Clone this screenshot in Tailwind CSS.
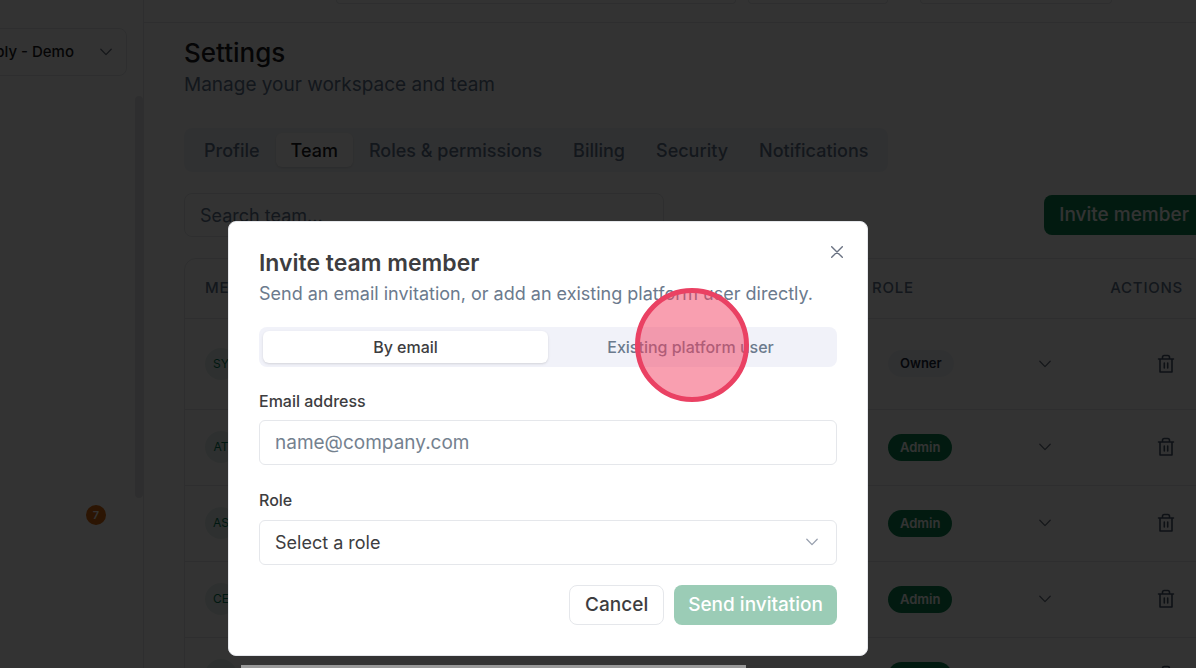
<!DOCTYPE html>
<html lang="en">
<head>
  <meta charset="UTF-8" />
  <meta name="viewport" content="width=device-width, initial-scale=1.0"/>
  <title>Settings | Team</title>
  <script src="https://cdn.jsdelivr.net/npm/@tailwindcss/browser@4"></script>
</head>
<body class="relative h-screen overflow-hidden bg-white font-['Inter',sans-serif] text-[#1c1c1e]">

  <!-- Icons -->
  <svg class="hidden">
    <symbol id="chevron" viewBox="0 0 16 16" fill="none" stroke="currentColor" stroke-width="1.3" stroke-linecap="round" stroke-linejoin="round">
      <path d="M2.800 5.300 8 10.600l5.200-5.300" />
    </symbol>
    <symbol id="trash" viewBox="0 0 18 20" fill="none" stroke="currentColor" stroke-width="1.600" stroke-linecap="round" stroke-linejoin="round">
      <path d="M1.500 5h15M3 5v13h12V5M5.500 5V3.200Q5.500 1.500 7.200 1.500h3.600Q12.500 1.500 12.500 3.200V5M7.300 9v5M10.700 9v5" />
    </symbol>
  </svg>

  <div class="flex h-full">
    <!-- Sidebar -->
    <aside class="relative flex w-36 shrink-0 flex-col overflow-hidden border-r border-gray-200 pt-7">
      <button class="-ml-4 mr-4 flex h-12 items-center justify-end gap-6 overflow-hidden whitespace-nowrap rounded-lg border border-gray-200 pr-3 text-[15px] font-medium">
        <span>Supply - Demo</span>
        <svg class="size-4 shrink-0 text-gray-500"><use href="#chevron" /></svg>
      </button>
      <a href="#" class="mt-[429px] mr-[37px] flex size-5 items-center justify-center self-end rounded-full bg-[#d9690f] text-[11px] font-semibold text-white">7</a>
      <div class="absolute top-24 right-0 h-[402px] w-2 rounded bg-gray-200"></div>
    </aside>

    <div class="min-w-0 flex-1 overflow-hidden">
      <!-- Top bar -->
      <header class="flex h-[23px] items-start gap-3 border-b border-gray-200 pl-48">
        <div class="h-1 w-[400px] rounded-b-lg border border-t-0 border-gray-200"></div>
        <div class="h-1 w-[140px] rounded-b-lg border border-t-0 border-gray-200"></div>
        <div class="ml-5 h-1 w-[192px] rounded-b-lg border border-t-0 border-gray-200"></div>
      </header>

      <main class="-mr-2 pt-3 pl-10">
        <h1 class="text-[26px] leading-9 font-medium">Settings</h1>
        <p class="text-[19px] leading-7 text-slate-500">Manage your workspace and team</p>

        <nav class="mt-[29px] flex h-11 w-fit items-center gap-px rounded-lg bg-slate-100 p-[5px] text-[18px] font-medium text-slate-500">
          <a href="#" class="px-[15px]">Profile</a>
          <a href="#" class="flex h-full items-center rounded-md bg-white px-[15px] text-[#1c1c1e] shadow-sm">Team</a>
          <a href="#" class="px-[15px]">Roles &amp; permissions</a>
          <a href="#" class="px-[15px]">Billing</a>
          <a href="#" class="px-[15px]">Security</a>
          <a href="#" class="px-[15px]">Notifications</a>
        </nav>

        <div class="mt-[21px] flex items-center justify-between">
          <input type="text" aria-label="Search team" placeholder="Search team..." class="h-11 w-[480px] rounded-lg border border-gray-200 px-[15px] text-[18px] placeholder:text-slate-500" />
          <button class="h-10 rounded-lg bg-[#0a8450] px-[15px] text-[19px] font-medium text-white">Invite member</button>
        </div>

        <div class="mt-[21px] rounded-xl border border-gray-200">
          <table class="w-full table-fixed">
            <thead>
              <tr class="h-[59px] border-b border-gray-200 text-[15px] tracking-wider text-slate-500">
                <th class="px-5 text-left font-medium">MEMBER</th>
                <th class="w-[229px] px-5 text-left font-medium">ROLE</th>
                <th class="w-[122px] px-5 text-right font-medium">ACTIONS</th>
              </tr>
            </thead>
            <tbody id="members"></tbody>
          </table>
        </div>
      </main>
    </div>
  </div>

  <!-- Backdrop -->
  <div class="absolute inset-0 bg-black/80"></div>
  <div class="absolute bottom-0 left-[241px] h-[3px] w-[505px] bg-[#999]"></div>

  <!-- Invite dialog -->
  <div role="dialog" aria-labelledby="dialog-title" class="absolute top-[221px] left-[228px] w-[640px] rounded-lg border border-gray-200 bg-white px-[30px] pt-[29px] pb-[30px] text-[#3d3d40]">
    <button aria-label="Close" class="absolute top-5 right-5 flex size-5 items-center justify-center text-gray-500">
      <svg class="size-3" viewBox="0 0 12 12" fill="none" stroke="currentColor" stroke-width="1.400" stroke-linecap="round"><path d="M.7.7l10.600 10.600M11.300.7.7 11.300" /></svg>
    </button>
    <h2 id="dialog-title" class="text-[23px] leading-6 font-semibold">Invite team member</h2>
    <p class="mt-[5px] text-[18px] leading-7 whitespace-nowrap text-[#6b7a8d]">Send an email invitation, or add an existing platform user directly.</p>

    <div class="mt-[19px] grid h-10 grid-cols-2 rounded-lg bg-[#f1f2f9] p-1 text-[16px] font-medium">
      <button class="rounded-md bg-white shadow-sm">By email</button>
      <button class="text-[#6b7a8d]">Existing platform user</button>
    </div>

    <form>
      <label for="email" class="mt-6 block text-[16px] leading-5 font-medium">Email address</label>
      <input id="email" type="email" placeholder="name@company.com" class="mt-[9px] block h-[45px] w-full rounded-md border border-gray-200 px-[15px] text-[19px] placeholder:text-[#74818f]" />

      <label for="role" class="mt-[25px] block text-[16px] leading-5 font-medium">Role</label>
      <div class="relative mt-[10px]">
        <select id="role" class="block h-[45px] w-full appearance-none rounded-md border border-gray-200 px-[15px] text-[18px]">
          <option>Select a role</option>
        </select>
        <svg class="pointer-events-none absolute top-[14px] right-[17px] size-4 text-gray-400"><use href="#chevron" /></svg>
      </div>

      <div class="mt-5 flex justify-end gap-[10px] text-[19px] font-medium">
        <button type="button" class="h-10 rounded-lg border border-gray-200 px-[15px]">Cancel</button>
        <button type="button" class="h-10 rounded-lg bg-[#9bccb6] px-[14px] text-white">Send invitation</button>
      </div>
    </form>
  </div>

  <!-- Click marker -->
  <div class="pointer-events-none absolute top-[288px] left-[635px] size-[114px] rounded-full border-[5px] border-[#ea4163] bg-[#f43f62]/50"></div>

<script>
  const members = [
    { initials: "SY", role: "Owner", badge: "bg-slate-100 text-slate-800", row: "h-[91px]" },
    { initials: "AT", role: "Admin", badge: "bg-[#0a8450] text-white", row: "h-[76px]" },
    { initials: "AS", role: "Admin", badge: "bg-[#0a8450] text-white", row: "h-[76px]" },
    { initials: "CE", role: "Admin", badge: "bg-[#0a8450] text-white", row: "h-[76px]" },
    { initials: "", role: "Admin", badge: "bg-[#0a8450] text-white", row: "h-[76px]" },
  ];

  document.getElementById("members").innerHTML = members.map(m => `
    <tr class="${m.row} border-b border-gray-200">
      <td class="px-5">
        <span class="flex size-8 items-center justify-center rounded-full bg-[#e6f1ee] text-[12px] text-emerald-700">${m.initials}</span>
      </td>
      <td class="px-5">
        <button class="flex w-full items-center justify-between pr-2 pl-4">
          <span class="${m.badge} rounded-full px-3 py-1 text-[13px] leading-[19px] font-semibold">${m.role}</span>
          <svg class="size-4 text-gray-500"><use href="#chevron" /></svg>
        </button>
      </td>
      <td class="px-5">
        <button aria-label="Remove member" class="mr-2 ml-auto block text-slate-600">
          <svg class="h-5 w-[18px]"><use href="#trash" /></svg>
        </button>
      </td>
    </tr>
  `).join("");
</script>
</body>
</html>
